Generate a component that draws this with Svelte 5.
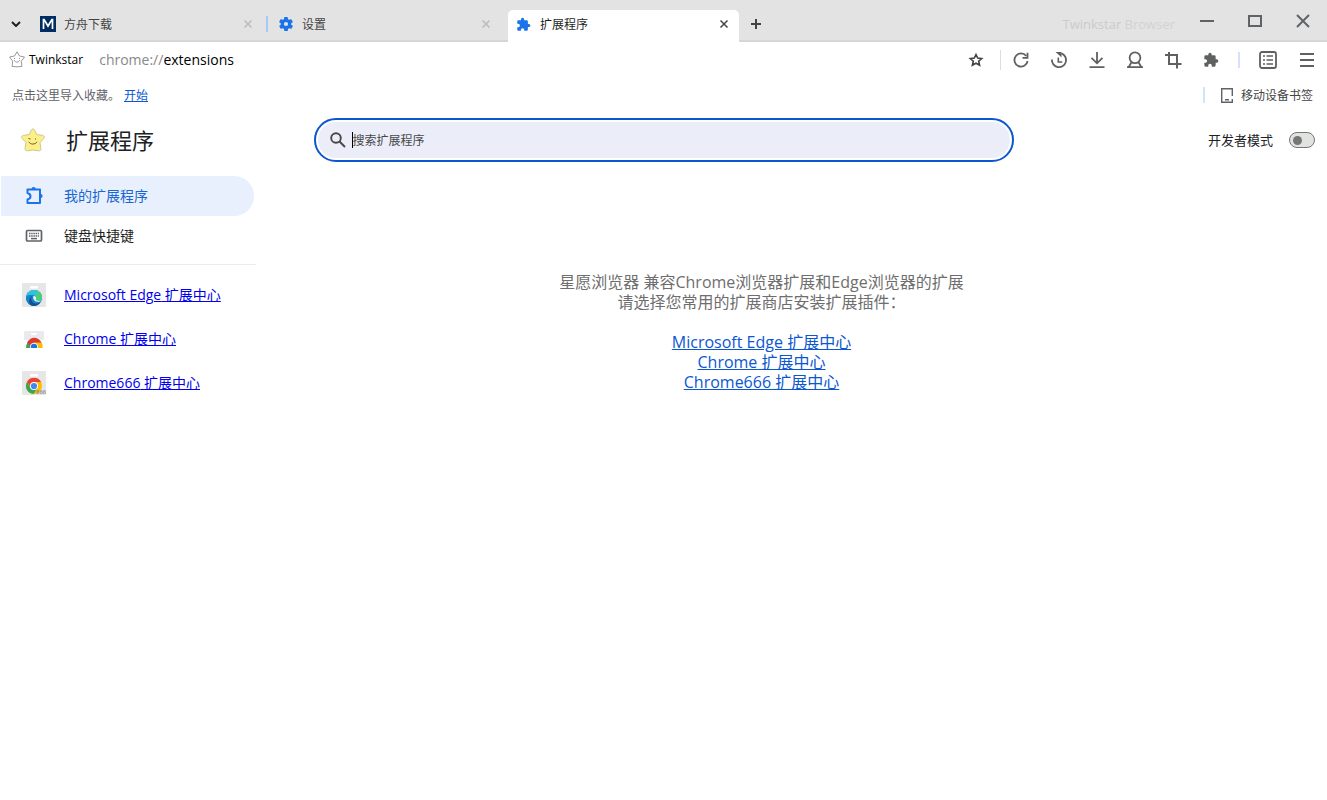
<script>
  let query = $state('');
  let devMode = $state(false);
  const stores = [
    { id: 'edge', name: 'Microsoft Edge' },
    { id: 'chrome', name: 'Chrome' },
    { id: 'chrome666', name: 'Chrome666' }
  ];
  const tabs = [
    { id: 'download', title: '方舟下载' },
    { id: 'settings', title: '设置' },
    { id: 'extensions', title: '扩展程序' }
  ];
  const tools = [
    ['reload', '重新加载'],
    ['history', '历史'],
    ['download', '下载'],
    ['profile', '用户'],
    ['crop', '截图'],
    ['puzzle', '扩展']
  ];
</script>

{#snippet puzzle(size)}
  <svg width={size} height={size} viewBox="0 0 24 24" fill="currentColor"><path d="M20.5 11H19V7a2 2 0 0 0-2-2h-4V3.500a2.500 2.500 0 0 0-5 0V5H4a2 2 0 0 0-2 2v3.800h1.500a2.700 2.700 0 0 1 0 5.400H2V20a2 2 0 0 0 2 2h3.800v-1.500a2.700 2.700 0 0 1 5.400 0V22H17a2 2 0 0 0 2-2v-4h1.500a2.500 2.500 0 0 0 0-5z" /></svg>
{/snippet}

{#snippet close(size)}
  <svg width={size} height={size} viewBox="0 0 8 8" fill="none" stroke="currentColor" stroke-width="1.500"><path d="M.5.5l7 7M7.500.5l-7 7" /></svg>
{/snippet}

{#snippet tool(name)}
  {#if name === 'puzzle'}
    {@render puzzle(16)}
  {:else}
    <svg width="18" height="18" viewBox="0 0 18 18" fill="none" stroke="currentColor" stroke-width="1.800">
      {#if name === 'reload'}
        <path d="M14.300 5A6.600 6.600 0 1 0 15.600 10" /><path d="M15.500 1.800v5h-5" />
      {:else if name === 'history'}
        <path d="M1.900 8.500a7.100 7.100 0 1 0 9.500-6.100" /><path d="M8.300 6.500V11h4" stroke-width="1.600" /><path d="M5.500 1h6v5.500L9.500 4.500z" fill="currentColor" stroke="none" />
      {:else if name === 'download'}
        <path d="M9 1v11M3.500 6.800L9 12.300l5.500-5.500M1.500 16.100h15" />
      {:else if name === 'profile'}
        <circle cx="9" cy="6.800" r="5.400" /><path d="M5.500 11.200l-2.800 4.900h12.600l-2.800-4.900M1 16.100h16" />
      {:else if name === 'crop'}
        <path d="M1 4h12v13.500M5 1v12h12.500" stroke-width="2" />
      {/if}
    </svg>
  {/if}
{/snippet}

{#snippet storeIcon(id)}
  <svg width="24" height="24" viewBox="0 0 24 24">
    {#if id === 'edge'}
      <rect width="24" height="24" rx="1" fill="#e6e6e6" /><rect x="8" y="3" width="8" height="2.500" rx="1" fill="#fff" />
      <circle cx="12" cy="15" r="8" fill="#1685ce" />
      <path d="M4 14C4.500 9 8 7 12 7c5 0 8 3.500 8 7 0 3-2.500 4.500-5.500 4.200-1.500-.2-2-1-1.500-1.800 1.500-2.500-.5-4.500-3-4.500-3 0-5 1-6 2.100z" fill="#35c1dc" />
      <path d="M16 8c3 1.500 4 3.700 4 6 0 3-2.500 4.500-5.500 4.200-1.500-.2-2-1-1.500-1.800 1.300-1.500 1-2.700.5-3.500z" fill="#4cce79" />
      <path d="M4 14c1.500-2.300 5-3 7-1.500-2 1.500-2.500 5 .5 7.500l-1 2.800C6.500 22 4 18.500 4 14z" fill="#1685ce" />
      <path d="M10.500 12.500c-2 2-1.500 6 1.500 7.500 2.500 1.200 5 .2 6.500-1.200-2 4-6.500 4.700-9 3.700-3.500-2-3-8 1-10z" fill="#154f92" />
      <path d="M11.500 13c-1 2.500.8 5.700 4.300 5.800 1.500 0 2.900-.5 3.700-1.300-3 .9-5.700.3-5.700-1 0-.6.500-1 .2-2-.3-.9-1.500-1.600-2.500-1.500z" fill="#eaf5fa" />
    {:else if id === 'chrome'}
      <rect x="2" y="4" width="20" height="9" rx="1" fill="#e8eaed" /><rect x="9" y="6" width="6" height="2" rx="1" fill="#fff" />
      <path d="M4 21a8 8.500 0 0 1 2-6l5 6z" fill="#34a853" /><path d="M12 14.500h7a8 8 0 0 1 1.500 6.500H12z" fill="#fbbc04" />
      <path d="M5 15.500C8.500 9 16 9 19.500 15.500H12l-3.500 4z" fill="#df3b2d" />
      <path d="M8 21v-1a4 4 0 0 1 8 0v1z" fill="#fff" /><path d="M8.800 21v-1a3.200 3.200 0 0 1 6.400 0v1z" fill="#1a73e8" />
    {:else}
      <rect width="24" height="24" rx="1" fill="#e6e6e6" /><rect x="8" y="3" width="8" height="2.500" rx="1" fill="#fff" />
      <circle cx="12" cy="15" r="8" fill="#fbbc04" />
      <path d="M5 11a8 8 0 0 0 6.500 12l4-6-7.500-1z" fill="#34a853" /><path d="M5 11a8 8 0 0 1 14 0h-7l-3.500 5z" fill="#ea4335" />
      <circle cx="12" cy="15" r="4" fill="#fff" /><circle cx="12" cy="15" r="3.100" fill="#4285f4" />
      <text x="14" y="23" font-size="6" font-weight="600" fill="#888">666</text>
    {/if}
  </svg>
{/snippet}

<div class="browser">
  <header class="tabbar">
    <button class="tablist" aria-label="标签页列表"><svg width="10" height="6" viewBox="0 0 10 6" fill="none" stroke="#202124" stroke-width="2"><path d="M1 1l4 4 4-4" /></svg></button>
    {#each tabs as tab}
      <div class="tab {tab.id}" class:active={tab.id === 'extensions'}>
        <span class="favicon">
          {#if tab.id === 'download'}
            <svg width="16" height="16" viewBox="0 0 16 16"><path fill="#002d62" d="M0 0h16v16H0z" /><path d="M3.500 13V3.500h.6L8 10l3.900-6.500h.6V13" fill="none" stroke="#fff" stroke-width="1.700" /></svg>
          {:else if tab.id === 'settings'}
            <svg width="14" height="14" viewBox="2 2 20 20" fill="#1a73e8"><path d="M19.400 13a7.500 7.500 0 0 0 0-2l2.100-1.600a.5.5 0 0 0 .1-.6l-2-3.500a.5.5 0 0 0-.6-.2l-2.500 1a7.700 7.700 0 0 0-1.700-1l-.4-2.600A.5.500 0 0 0 14 2h-4a.5.500 0 0 0-.5.400l-.4 2.700a7.700 7.700 0 0 0-1.700 1l-2.500-1a.5.500 0 0 0-.6.200l-2 3.500a.5.500 0 0 0 .1.600L4.600 11a8 8 0 0 0 0 2l-2.100 1.600a.5.500 0 0 0-.1.600l2 3.500c.1.200.4.300.6.200l2.500-1a7.700 7.700 0 0 0 1.700 1l.4 2.700c0 .2.200.4.400.4h4c.3 0 .5-.2.5-.4l.4-2.700a7.700 7.700 0 0 0 1.700-1l2.500 1c.2.100.5 0 .6-.2l2-3.500a.5.500 0 0 0-.1-.6zM12 15a3 3 0 1 1 0-6 3 3 0 0 1 0 6z" /></svg>
          {:else}
            {@render puzzle(15)}
          {/if}
        </span>
        <span class="tabtitle">{tab.title}</span>
        <button class="tabclose" aria-label="关闭标签页">{@render close(8)}</button>
      </div>
    {/each}
    <button class="newtab" aria-label="新标签页"><svg width="10" height="10" viewBox="0 0 10 10" stroke="#444" stroke-width="2"><path d="M5 0v10M0 5h10" /></svg></button>
    <span class="brand"><b>Twinkstar</b> Browser</span>
    <div class="winbtns">
      <button aria-label="最小化"><svg width="14" height="14" viewBox="0 0 14 14" stroke="currentColor" stroke-width="2"><path d="M0 7h14" /></svg></button>
      <button aria-label="最大化"><svg width="14" height="12" viewBox="0 0 14 12" fill="none" stroke="currentColor" stroke-width="2"><path d="M1 1h12v10H1z" /></svg></button>
      <button aria-label="关闭"><svg width="14" height="14" viewBox="0 0 14 14" stroke="currentColor" stroke-width="2"><path d="M1 1l12 12M13 1L1 13" /></svg></button>
    </div>
  </header>

  <div class="toolbar">
    <svg width="16" height="17" viewBox="0 0 16 17" fill="none" stroke="#999" stroke-linejoin="round"><path d="M8 .8L10.500 5l5 1-3.200 4.200.6 5.300L8 15.800l-4.900-.3.600-5.300L.5 6l5-1z" /><path d="M5.200 9.200c1 2.500 4.500 2.500 5.600 0M5.500 7v1M10.500 7v1" /></svg>
    <span class="appname">Twinkstar</span>
    <span class="url"><span>chrome://</span>extensions</span>
    <button class="tool star" aria-label="收藏"><svg width="16" height="16" viewBox="0 0 16 16" fill="none" stroke="#444" stroke-width="1.600"><path d="M8 2.500l1.700 3.600 4 .4-3 2.700.9 4L8 11.200l-3.600 2 .9-4-3-2.700 4-.4z" /></svg></button>
    <i class="rule grey"></i>
    {#each tools as [id, label]}
      <button class="tool" aria-label={label}>{@render tool(id)}</button>
    {/each}
    <i class="rule blue"></i>
    <button class="tool" aria-label="阅读列表"><svg width="18" height="18" viewBox="0 0 18 18" fill="none" stroke="currentColor" stroke-width="1.800"><rect x="1" y="1" width="16" height="16" rx="2" /><path d="M4 5h2M7.500 5H14M4 9h2M7.500 9H14M4 13h2M7.500 13H14" stroke-width="1.600" /></svg></button>
    <button class="tool menu" aria-label="菜单"><svg width="14" height="14" viewBox="0 0 14 14" stroke="currentColor" stroke-width="2"><path d="M0 1h14M0 7h14M0 13h14" /></svg></button>
  </div>

  <div class="bookmarks">
    <span>点击这里导入收藏。</span><a href="#import">开始</a>
    <i class="rule mark"></i>
    <button class="mobile"><svg width="12" height="15" viewBox="0 0 12 15" fill="none" stroke="#5f6368" stroke-width="1.400"><path d="M11.300 8V.700H.700v13.600h10.600V11M4 11.800h4" /></svg>移动设备书签</button>
  </div>

  <div class="pagehead">
    <div class="heading">
      <svg width="24" height="24" viewBox="0 0 24 24"><path d="M12 1c1 0 1.500.7 2 1.600L15.800 6.500l5.700.9c2 .3 2.500 1.700 1.300 3l-3.800 4.200.9 5.600c.3 2-.8 2.900-2.400 2.600L12 22l-5.500.8c-1.600.3-2.700-.6-2.400-2.600l.9-5.600-3.800-4.200C0 9.100.5 7.700 2.500 7.400l5.700-.9L10 2.600C10.500 1.700 11 1 12 1z" fill="#fbef86" stroke="#cbc69a" /><path d="M7.800 13.800c1.500 3 6.500 3 8.200 0M7.500 10.500l2 .5M14.500 10.500v1" stroke="#665b35" fill="none" /></svg>
      <h1>扩展程序</h1>
    </div>
    <label class="search">
      <svg width="16" height="16" viewBox="0 0 16 16" fill="none" stroke="#474747" stroke-width="1.900"><circle cx="6" cy="6" r="4.800" /><path d="M9.500 9.500l5.500 5.500" /></svg>
      <i class="caret"></i><input type="text" bind:value={query} placeholder="搜索扩展程序" aria-label="搜索扩展程序" />
    </label>
    <label class="dev"><span>开发者模式</span><input type="checkbox" role="switch" bind:checked={devMode} /></label>
  </div>

  <div class="body">
    <nav>
      <a class="item selected" href="#mine"><svg width="20" height="20" viewBox="0 0 20 20" fill="none" stroke="#1a73e8" stroke-width="2" stroke-linejoin="round"><path d="M3.500 3.500h12.500V17H3.500v-3.500q3-.8 3-3.200t-3-3.300z" /><path d="M7.500 3a2.100 2.100 0 0 1 4.200 0zM16.500 8a2.100 2.100 0 0 1 0 4.200z" fill="#1a73e8" stroke="none" /></svg><span>我的扩展程序</span></a>
      <a class="item" href="#keys"><svg width="20" height="20" viewBox="0 0 20 20" fill="none" stroke="#5f6368" stroke-width="1.700"><rect x="2.500" y="4.500" width="15" height="10.500" rx="1" /><path d="M5 7.500h10M5 10h10" stroke-dasharray="1.500 .7" stroke-width="1.500" /><path d="M7 12.600h6" stroke-width="1.500" /></svg><span>键盘快捷键</span></a>
      <hr />
      {#each stores as s}
        <a class="store" href={'#' + s.id}>{@render storeIcon(s.id)}<span><b>{s.name}</b> 扩展中心</span></a>
      {/each}
    </nav>
    <main>
      <p>星愿浏览器 兼容<b>Chrome</b>浏览器扩展和<b>Edge</b>浏览器的扩展<br />请选择您常用的扩展商店安装扩展插件：</p>
      {#each stores as s}
        <a href={'#' + s.id}><b>{s.name}</b> 扩展中心</a>
      {/each}
    </main>
  </div>
</div>

<style>
  :global(body) { margin: 0; background: #fff; }
  .browser { min-height: 100vh; font: 12px/17px "Open Sans", "Noto Sans CJK SC", sans-serif; color: #202124; }
  .browser * { box-sizing: border-box; }
  svg { display: block; flex: none; }
  b { font-weight: 500; }
  button { border: 0; padding: 0; background: none; font: inherit; color: inherit; display: grid; place-items: center; }
  .tabbar { height: 42px; background: #e3e3e3; box-shadow: inset 0 -2px #d6d6d6; display: flex; align-items: flex-end; }
  .tablist { width: 32px; height: 36px; }
  .tab { position: relative; height: 32px; padding: 0 11px 4px 8px; display: flex; align-items: center; flex: 0 1 238px; color: #444; }
  .tab.download { flex-basis: 236px; }
  .tab.download::after { content: ""; position: absolute; right: 0; top: 6px; width: 2px; height: 16px; background: #a8c7fa; }
  .tab.settings { flex-basis: 240px; padding: 0 18px 4px 11px; }
  .tab.active { flex-basis: 231px; background: #fff; border-radius: 5px 5px 0 0; color: #1f1f1f; }
  .favicon { width: 24px; color: #1a73e8; }
  .settings .favicon { width: 23px; }
  .tabtitle { flex: 1; white-space: nowrap; }
  .tabclose { color: #bbb; }
  .download .tabclose { margin-right: 5px; }
  .active .tabclose { color: #444; }
  .newtab { width: 34px; height: 36px; }
  .brand { margin-left: auto; padding-bottom: 9px; font-size: 13px; color: #d2d2d2; }
  .brand b { color: #cbcbcb; }
  .winbtns { display: flex; align-self: flex-start; margin-left: 8px; color: #5f6368; }
  .winbtns button { width: 48px; height: 42px; }
  .toolbar { height: 37px; display: flex; align-items: center; padding: 0 0 2px 9px; color: #5f6060; }
  .appname { margin-left: 4px; color: #000; }
  .url { margin: 0 auto 0 16px; font-size: 14px; line-height: 20px; color: #000; }
  .url span { color: #888; }
  .tool { width: 38px; height: 34px; }
  .menu { width: 40px; }
  .rule { flex: none; }
  .grey { width: 1px; height: 20px; margin: 0 1px 0 5px; background: #ddd; }
  .blue { width: 2px; height: 16px; margin: 0 9px 0 8px; background: #d3e3fd; }
  .bookmarks { height: 32px; display: flex; align-items: center; padding: 0 14px 0 12px; color: #5f6368; }
  .bookmarks a { margin-left: 4px; color: #0b57d0; }
  .mark { width: 2px; height: 16px; margin: 0 16px 0 auto; background: #d3e3fd; }
  .mobile { display: flex; align-items: center; gap: 8px; color: #444; }
  .pagehead { height: 58px; display: grid; grid-template-columns: 1fr minmax(300px, 700px) 1fr; align-items: center; padding: 0 12px; column-gap: 12px; }
  .heading { display: flex; align-items: center; gap: 21px; padding-left: 9px; }
  h1 { margin: 0; font-size: 22px; font-weight: 400; line-height: 30px; }
  .search { height: 44px; border: 2px solid #0b57d0; border-radius: 22px; padding-left: 14px; display: flex; align-items: center; box-shadow: inset 0 0 0 2px #fff; background: #ebeef8; }
  .caret { width: 1px; height: 16px; margin-left: 6px; background: #000; }
  .search input { flex: 1; min-width: 0; height: 20px; padding: 0; border: 0; outline: 0; background: transparent; font: inherit; }
  .search input::placeholder { color: #474747; opacity: 1; }
  .dev { display: flex; align-items: center; justify-content: flex-end; gap: 16px; font-size: 13px; line-height: 16px; }
  .dev input { appearance: none; margin: 0; width: 26px; height: 16px; border: 1px solid #747775; border-radius: 8px; background: #e1e3e1; display: flex; align-items: center; padding: 0 3px; }
  .dev input::before { content: ""; width: 9px; height: 9px; border-radius: 50%; background: #747775; }
  .dev input:checked { justify-content: flex-end; background: #d3e3fd; }
  .body { display: grid; grid-template-columns: 256px 1fr; }
  nav { padding-top: 7px; font-size: 14px; line-height: 20px; }
  .item { height: 40px; margin: 0 2px 0 1px; padding-left: 23px; display: flex; align-items: center; gap: 20px; border-radius: 0 20px 20px 0; color: #1f1f1f; text-decoration: none; }
  .selected { background: #e8f0fe; color: #1967d2; }
  hr { margin: 8px 0; border: 0; border-top: 1px solid #ececec; }
  .store { height: 44px; padding-left: 22px; display: flex; align-items: center; gap: 18px; color: #0000ee; }
  main { padding: 103px 60px 0 0; display: flex; flex-direction: column; align-items: center; font-size: 16px; line-height: 20px; text-align: center; color: #6e6e6e; }
  p { margin: 0 0 20px; }
  main a { color: #0b57d0; }
</style>
